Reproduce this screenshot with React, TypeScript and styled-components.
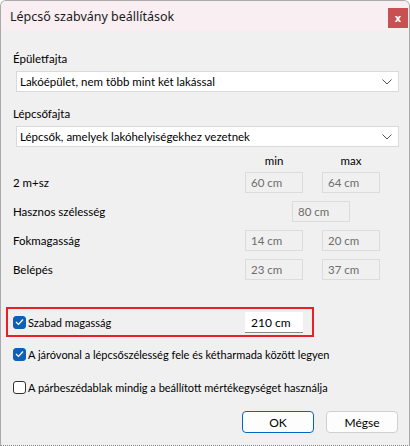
import React from "react";
import styled, { createGlobalStyle } from "styled-components";

const Global = createGlobalStyle`
  html, body { margin: 0; padding: 0; background: #ffffff; }
  body { font-family: Lato, "Noto Sans", sans-serif; font-size: 11.5px; color: #000; }
  * { box-sizing: border-box; }
`;

const Window = styled.div`
  width: 410px;
  height: 446px;
  display: flex;
  flex-direction: column;
  background: #f0f0f0;
  border: 1px solid #a9a9a9;
  border-top-left-radius: 6px;
  border-top-right-radius: 6px;
  border-bottom: 1px dotted #8a8a8a;
  overflow: hidden;
`;

const TitleBar = styled.div`
  height: 30px;
  flex: none;
  display: flex;
  align-items: flex-start;
  justify-content: space-between;
  background: #f9eef2;
  padding-left: 9px;
`;

const Title = styled.div`
  font-family: "Noto Sans", sans-serif;
  font-size: 12.5px;
  line-height: 31px;
  color: #1a1a1a;
`;

const CloseButton = styled.div`
  width: 20px;
  height: 20px;
  margin-top: 7px;
  margin-right: 1px;
  background: #c85050;
  color: #fff;
  font-family: "DejaVu Sans", sans-serif;
  font-weight: bold;
  font-size: 10px;
  display: flex;
  align-items: center;
  justify-content: center;
`;

const Body = styled.div`
  flex: 1;
  display: flex;
  flex-direction: column;
  padding: 19px 10px 0 12px;
`;

const FieldLabel = styled.div`
  height: 18px;
  line-height: 18px;
`;

const Select = styled.div<{ $after: number }>`
  margin: 3px 0 ${(p) => p.$after}px 3px;
  width: 383px;
  height: 21px;
  flex: none;
  background: #fff;
  border: 1px solid #d9d9d9;
  display: flex;
  align-items: center;
  justify-content: space-between;
  padding: 0 6px 0 3px;
`;

const Grid = styled.div`
  display: grid;
  grid-template-columns: 232px 58px 19px 58px;
  grid-template-rows: 20px repeat(4, 29px);
  align-items: center;
  flex: none;
`;

const ColHead = styled.div<{ $col: number }>`
  grid-column: ${(p) => p.$col};
  align-self: end;
  line-height: 14px;
  text-align: center;
`;

const RowLabel = styled.div`
  grid-column: 1;
`;

const ReadOnlyBox = styled.div<{ $col: number; $shift?: number }>`
  grid-column: ${(p) => p.$col};
  margin-left: ${(p) => p.$shift ?? 0}px;
  width: 58px;
  height: 21px;
  border: 1px solid #dcdcdc;
  color: #6d6d6d;
  padding-left: 5px;
  line-height: 19px;
  white-space: nowrap;
`;

const Highlight = styled.div`
  margin: 23px 0 0 -7px;
  width: 308px;
  height: 30px;
  flex: none;
  border: 2px solid #e8202a;
  display: flex;
  align-items: center;
  padding-left: 5px;
`;

const CheckRow = styled.div<{ $top?: number }>`
  display: flex;
  align-items: center;
  gap: 2px;
  height: 16px;
  flex: none;
  font-size: 11px;
  margin-top: ${(p) => p.$top ?? 0}px;
`;

const Box = styled.span<{ $checked: boolean }>`
  width: 13px;
  height: 13px;
  border-radius: 3px;
  flex: none;
  display: flex;
  align-items: center;
  justify-content: center;
  background: ${(p) => (p.$checked ? "#0f5fb8" : "#ffffff")};
  border: 1px solid ${(p) => (p.$checked ? "#0f5fb8" : "#333")};
`;

const ValueInput = styled.div`
  margin-left: auto;
  margin-right: 9px;
  width: 58px;
  height: 21px;
  background: #fff;
  border-bottom: 1px solid #8a8a8a;
  padding-left: 6px;
  line-height: 21px;
  font-size: 12px;
`;

const Footer = styled.div`
  margin-top: auto;
  margin-bottom: 12px;
  display: flex;
  justify-content: flex-end;
  gap: 12px;
  padding-right: 1px;
`;

const Button = styled.div<{ $primary?: boolean }>`
  width: 72px;
  height: 22px;
  border-radius: 4px;
  background: #fdfdfd;
  border: 1px solid ${(p) => (p.$primary ? "#0067c0" : "#d0d0d0")};
  display: flex;
  align-items: center;
  justify-content: center;
  font-size: 12px;
`;

const Chevron = () => (
  <svg width="10" height="6" viewBox="0 0 10 6">
    <path d="M0.5 0.5 L5 5 L9.5 0.5" fill="none" stroke="#555" strokeWidth="1" />
  </svg>
);

const Tick = () => (
  <svg width="9" height="8" viewBox="0 0 9 8">
    <path d="M1 4 L3.5 6.5 L8 1.5" fill="none" stroke="#fff" strokeWidth="1.2" />
  </svg>
);

export default function App() {
  return (
    <>
      <Global />
      <Window>
        <TitleBar>
          <Title>Lépcső szabvány beállítások</Title>
          <CloseButton>x</CloseButton>
        </TitleBar>
        <Body>
          <FieldLabel>Épületfajta</FieldLabel>
          <Select $after={13}>
            <span>Lakóépület, nem több mint két lakással</span>
            <Chevron />
          </Select>
          <FieldLabel>Lépcsőfajta</FieldLabel>
          <Select $after={1}>
            <span>Lépcsők, amelyek lakóhelyiségekhez vezetnek</span>
            <Chevron />
          </Select>
          <Grid>
            <ColHead $col={2}>min</ColHead>
            <ColHead $col={4}>max</ColHead>
            <RowLabel>2 m+sz</RowLabel>
            <ReadOnlyBox $col={2}>60 cm</ReadOnlyBox>
            <ReadOnlyBox $col={4}>64 cm</ReadOnlyBox>
            <RowLabel>Hasznos szélesség</RowLabel>
            <ReadOnlyBox $col={2} $shift={47}>80 cm</ReadOnlyBox>
            <RowLabel>Fokmagasság</RowLabel>
            <ReadOnlyBox $col={2}>14 cm</ReadOnlyBox>
            <ReadOnlyBox $col={4}>20 cm</ReadOnlyBox>
            <RowLabel>Belépés</RowLabel>
            <ReadOnlyBox $col={2}>23 cm</ReadOnlyBox>
            <ReadOnlyBox $col={4}>37 cm</ReadOnlyBox>
          </Grid>
          <Highlight>
            <CheckRow>
              <Box $checked><Tick /></Box>
              Szabad magasság
            </CheckRow>
            <ValueInput>210 cm</ValueInput>
          </Highlight>
          <CheckRow $top={9}>
            <Box $checked><Tick /></Box>
            A járóvonal a lépcsőszélesség fele és kétharmada között legyen
          </CheckRow>
          <CheckRow $top={17}>
            <Box $checked={false} />
            A párbeszédablak mindig a beállított mértékegységet használja
          </CheckRow>
          <Footer>
            <Button $primary>OK</Button>
            <Button>Mégse</Button>
          </Footer>
        </Body>
      </Window>
    </>
  );
}
